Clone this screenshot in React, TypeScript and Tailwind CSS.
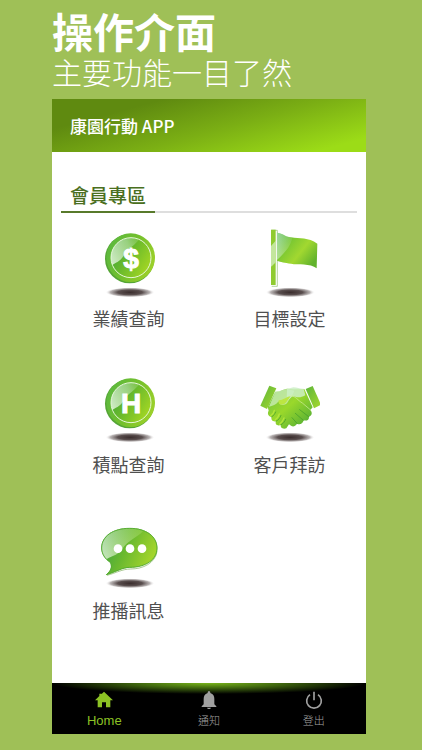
/**
 * Member area home screen with its promo headline
 */

import React from 'react';

const Shadow: React.FC<{ id: string; cx: number; cy: number }> = ({ id, cx, cy }) => (
  <>
    <defs>
      <radialGradient id={id}>
        <stop offset="0" stopColor="#3a2d2d" />
        <stop offset="0.5" stopColor="#5a4f4f" />
        <stop offset="0.8" stopColor="#a9a3a3" stopOpacity="0.8" />
        <stop offset="1" stopColor="#ffffff" stopOpacity="0" />
      </radialGradient>
    </defs>
    <ellipse cx={cx} cy={cy} rx="74" ry="15" fill={`url(#${id})`} />
  </>
);

interface CoinIconProps {
  id: string;
  letter: string;
  viewBox: string;
}

const CoinIcon: React.FC<CoinIconProps> = ({ id, letter, viewBox }) => (
  <svg viewBox={viewBox} className="h-[72px] w-[60px]" aria-hidden="true">
    <defs>
      <linearGradient id={`${id}-rim`} x1="0" y1="0.3" x2="1" y2="0.7">
        <stop offset="0" stopColor="#5cb93f" />
        <stop offset="0.5" stopColor="#74c02c" />
        <stop offset="1" stopColor="#a0d22a" />
      </linearGradient>
      <linearGradient id={`${id}-face`} x1="0" y1="0" x2="1" y2="0.6">
        <stop offset="0" stopColor="#35a13f" />
        <stop offset="0.5" stopColor="#66b82c" />
        <stop offset="1" stopColor="#9fd424" />
      </linearGradient>
      <linearGradient id={`${id}-glare`} x1="0" y1="0.6" x2="1" y2="0.2">
        <stop offset="0" stopColor="#e4f5dd" stopOpacity="0.9" />
        <stop offset="0.6" stopColor="#b4deA0" stopOpacity="0.7" />
        <stop offset="1" stopColor="#8ccb50" stopOpacity="0.3" />
      </linearGradient>
      <clipPath id={`${id}-clip`}>
        <circle cx="138" cy="98" r="60" />
      </clipPath>
    </defs>
    <Shadow id={`${id}-shadow`} cx={135} cy={202} />
    <circle cx="134" cy="101" r="74" fill="#55a535" />
    <circle cx="137" cy="98" r="73" fill={`url(#${id}-rim)`} />
    <circle cx="138" cy="98" r="60" fill={`url(#${id}-face)`} />
    <path
      d="M60 20H176C168 52 128 68 116 92C104 112 90 112 76 124H60Z"
      fill={`url(#${id}-glare)`}
      clipPath={`url(#${id}-clip)`}
    />
    <circle cx="138" cy="98" r="60" fill="none" stroke="#e6f7d8" strokeWidth="3" />
    <text
      x="138"
      y="128"
      textAnchor="middle"
      fill="#ffffff"
      stroke="#ffffff"
      strokeWidth="3"
      className="font-['Liberation_Sans',Arial,sans-serif] text-[84px] font-bold"
    >
      {letter}
    </text>
  </svg>
);

const FlagIcon: React.FC = () => (
  <svg viewBox="45 15 180 216" className="h-[72px] w-[60px]" aria-hidden="true">
    <defs>
      <linearGradient id="flag-cloth" x1="0" y1="0" x2="1" y2="0.7">
        <stop offset="0" stopColor="#3fae49" />
        <stop offset="0.35" stopColor="#7cc832" />
        <stop offset="0.65" stopColor="#a2d830" />
        <stop offset="1" stopColor="#62b32d" />
      </linearGradient>
      <linearGradient id="flag-glare" x1="0" y1="0" x2="1" y2="0">
        <stop offset="0" stopColor="#d4f0cf" stopOpacity="0.6" />
        <stop offset="1" stopColor="#d4f0cf" stopOpacity="0.1" />
      </linearGradient>
    </defs>
    <Shadow id="flag-shadow" cx={136} cy={217} />
    <path d="M80 31H97V199H80" fill="none" stroke="#8fbf70" strokeWidth="2" />
    <rect x="78" y="29" width="14" height="166" fill="#8fcb30" />
    <path
      d="M96 38C108 38 122 50 138 52C164 56 190 52 217 71L215 145C196 128 158 136 138 131C118 128 108 126 96 122Z"
      fill="url(#flag-cloth)"
    />
    <path d="M96 38C108 38 122 50 142 53C136 84 112 104 96 120Z" fill="url(#flag-glare)" />
    <path d="M78 78L92 62V126C88 132 83 136 78 140Z" fill="#d4efc2" fillOpacity="0.75" />
  </svg>
);

const HandshakeIcon: React.FC = () => (
  <svg viewBox="45 3 180 216" className="h-[72px] w-[60px]" aria-hidden="true">
    <defs>
      <linearGradient id="hand-main" x1="0" y1="0" x2="1" y2="1">
        <stop offset="0" stopColor="#6cc044" />
        <stop offset="0.45" stopColor="#9ad82b" />
        <stop offset="1" stopColor="#46a637" />
      </linearGradient>
      <linearGradient id="hand-cuff" x1="0" y1="0" x2="1" y2="1">
        <stop offset="0" stopColor="#5cb53c" />
        <stop offset="1" stopColor="#a7d92b" />
      </linearGradient>
    </defs>
    <Shadow id="hand-shadow" cx={135} cy={202} />
    <path d="M73 47L94 55L66 117L46 107Z" fill="url(#hand-cuff)" />
    <path d="M182 57L203 48L228 104L207 115Z" fill="url(#hand-cuff)" />
    <path
      d="M91 65C105 66 113 58 126 56L145 58L178 57L203 112L196 120C203 128 201 137 192 140C193 149 185 154 176 151C173 162 164 165 156 161C148 173 140 170 132 163L124 175C113 178 105 173 108 165C97 169 89 163 93 154C83 156 77 149 80 141C70 139 66 131 71 122L68 110Z"
      fill="url(#hand-main)"
    />
    <path
      d="M72 110L91 65C105 66 113 58 126 57L148 62C142 80 132 87 126 100C116 109 101 105 101 94C94 104 82 108 72 110Z"
      fill="#d9f3cf"
      fillOpacity="0.65"
    />
    <path d="M126 57L145 52C158 52 166 58 176 56L181 76C160 88 154 78 141 80L125 94Z" fill="#cdefc5" fillOpacity="0.85" />
    <path d="M137 77C152 78 158 91 172 99L198 121" fill="none" stroke="#d3efa0" strokeWidth="2" />
    <path d="M101 91C98 108 116 109 126 94L137 79C123 80 114 92 101 91Z" fill="#bce642" />
    <path
      d="M80 141C86 137 90 131 92 126M93 154C101 150 106 143 108 136M108 165C115 160 120 154 122 148M164 119L191 140M151 130L175 151M141 143L157 161"
      fill="none"
      stroke="#3e982b"
      strokeWidth="2"
      strokeLinecap="round"
    />
    <path
      d="M77 137C83 133 87 127 88 121M90 150C97 146 101 139 103 132M104 162C111 157 115 150 117 144"
      fill="none"
      stroke="#b4e63a"
      strokeWidth="4"
      strokeLinecap="round"
    />
  </svg>
);

const ChatIcon: React.FC = () => (
  <svg viewBox="42 -9 180 216" className="h-[72px] w-[60px]" aria-hidden="true">
    <defs>
      <linearGradient id="chat-fill" x1="0" y1="0.2" x2="1" y2="0.6">
        <stop offset="0" stopColor="#35a045" />
        <stop offset="0.45" stopColor="#68b82f" />
        <stop offset="1" stopColor="#acd92c" />
      </linearGradient>
      <linearGradient id="chat-glare" x1="0" y1="0.5" x2="1" y2="0.2">
        <stop offset="0" stopColor="#e0f3d8" stopOpacity="0.8" />
        <stop offset="1" stopColor="#a4d860" stopOpacity="0.35" />
      </linearGradient>
      <clipPath id="chat-clip">
        <path d="M134 24C184 24 217 49 217 84C217 119 183 142 134 143C112 143 92 157 62 165C77 152 81 143 76 128C58 116 49 101 49 84C49 49 84 24 134 24Z" />
      </clipPath>
    </defs>
    <Shadow id="chat-shadow" cx={135} cy={190} />
    <path
      d="M216 94C211 130 173 147 137 147C112 147 93 159 66 166"
      fill="none"
      stroke="#7fae5c"
      strokeWidth="2"
    />
    <path
      d="M134 24C184 24 217 49 217 84C217 119 183 142 134 143C112 143 92 157 62 165C77 152 81 143 76 128C58 116 49 101 49 84C49 49 84 24 134 24Z"
      fill="url(#chat-fill)"
    />
    <path d="M40 15H184C178 46 130 56 111 88C97 110 74 106 60 123H40Z" fill="url(#chat-glare)" clipPath="url(#chat-clip)" />
    <path
      d="M134 25C184 25 216 50 216 84C216 119 183 142 134 142C112 142 92 156 64 164C78 152 82 143 77 128C59 116 50 101 50 84C50 49 84 25 134 25Z"
      fill="none"
      stroke="#58ad35"
      strokeWidth="3"
    />
    <circle cx="99" cy="86" r="13" fill="#ffffff" />
    <circle cx="135" cy="86" r="13" fill="#ffffff" />
    <circle cx="171" cy="86" r="13" fill="#ffffff" />
  </svg>
);

const menuItems = [
  { label: '業績查詢', icon: <CoinIcon id="sales" letter="$" viewBox="42 0 180 216" /> },
  { label: '目標設定', icon: <FlagIcon /> },
  { label: '積點查詢', icon: <CoinIcon id="points" letter="H" viewBox="42 3 180 216" /> },
  { label: '客戶拜訪', icon: <HandshakeIcon /> },
  { label: '推播訊息', icon: <ChatIcon /> },
];

const HomeIcon: React.FC = () => (
  <svg viewBox="0 0 54 54" className="size-[18px]" fill="currentColor" aria-hidden="true">
    <path d="M27 2L54 28H46V49H33V34H21V49H8V28H0L13 15V8H20V9Z" />
  </svg>
);

const BellIcon: React.FC = () => (
  <svg viewBox="0 0 54 54" className="size-[18px]" fill="currentColor" aria-hidden="true">
    <path d="M27 0C30 0 31 3 31 6C40 9 43 15 43 24V40L49 46V48H5V46L11 40V24C11 15 14 9 23 6C23 3 24 0 27 0ZM21 50H33C32 56 22 56 21 50Z" />
  </svg>
);

const PowerIcon: React.FC = () => (
  <svg viewBox="0 0 54 54" className="size-[18px]" fill="none" stroke="currentColor" strokeWidth="5" aria-hidden="true">
    <path d="M27 2V28M15 11A22 22 0 1 0 39 11" />
  </svg>
);

export const App: React.FC = () => (
  <div className="min-h-screen bg-[#9fc057] pt-1.5 pr-14 pb-4 pl-[52px] font-['Noto_Sans_CJK_TC',sans-serif]">
    {/* Headline */}
    <h1 className="text-[41px] leading-[48px] font-bold text-white">操作介面</h1>
    <p className="pb-[11px] text-[30px] leading-[34px] font-light whitespace-nowrap text-white">主要功能一目了然</p>

    {/* App screen */}
    <main className="bg-white">
      <header className="bg-[linear-gradient(165deg,#5f8a10_22%,#7baf14_55%,#9cdc17_90%)] px-[18px] py-3">
        <h2 className="text-[17px] leading-[29px] font-medium text-white">康園行動 APP</h2>
      </header>

      <section className="px-[9px] pt-7 pb-[60px]">
        <div className="flex border-b-2 border-[#dedede]">
          <h3 className="-mb-0.5 border-b-2 border-[#587a2b] px-[9px] pb-0.5 text-[19px] leading-[29px] font-medium text-[#4a6f20]">
            會員專區
          </h3>
        </div>
        <div className="grid grid-cols-2 gap-x-[26px] gap-y-10 pt-3">
          {menuItems.map(({ label, icon }) => (
            <button key={label} type="button" className="flex flex-col items-center gap-2">
              {icon}
              <span className="text-lg leading-[26px] text-[#505050]">{label}</span>
            </button>
          ))}
        </div>
      </section>

      {/* Tab bar */}
      <nav className="grid grid-cols-3 bg-black bg-[radial-gradient(ellipse_50%_11px_at_50%_0,#79b51c,#41690f_45%,#000000)] pt-2 pb-[5px]">
        <a href="#home" className="flex flex-col items-center gap-[3px] text-[#8cc224]">
          <HomeIcon />
          <span className="font-['Liberation_Sans',Arial,sans-serif] text-[13px] leading-[17px]">Home</span>
        </a>
        <a href="#notices" className="flex flex-col items-center gap-[3px] text-[#a0a0a0]">
          <BellIcon />
          <span className="text-[11px] leading-[17px] font-light">通知</span>
        </a>
        <a href="#logout" className="flex flex-col items-center gap-[3px] text-[#a0a0a0]">
          <PowerIcon />
          <span className="text-[11px] leading-[17px] font-light">登出</span>
        </a>
      </nav>
    </main>
  </div>
);

export default App;
